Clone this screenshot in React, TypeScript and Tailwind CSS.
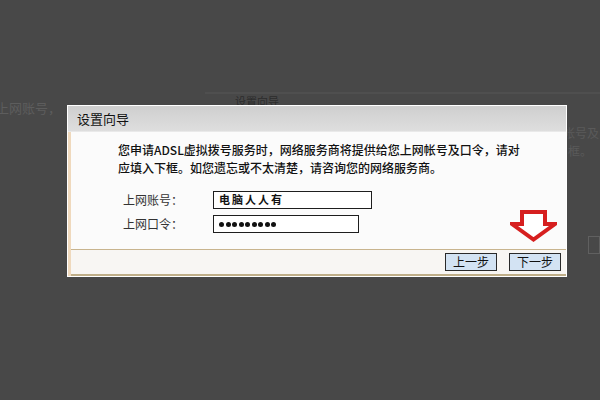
import React from 'react'

const cjk = { fontFamily: '"Noto Sans CJK SC", "Liberation Sans", sans-serif' }

// down arrow outline drawn over the wizard, pointing at the next button
const DownArrow = () => (
  <svg width="47" height="32" viewBox="0 0 47 32" className="block">
    <polygon
      points="12,2 35,2 35,14 45,14 23.5,29.5 2,14 12,14"
      fill="#ffffff"
      stroke="#d61f1f"
      strokeWidth="4"
      strokeLinejoin="miter"
    />
  </svg>
)

const WizButton = ({ label }: { label: string }) => (
  <button className="w-[52px] h-[18px] border border-[#2a2a2a] bg-[#d3e3f3] text-[12px] leading-[16px] text-[#111] flex items-center justify-center">
    {label}
  </button>
)

const Wizard = () => {
  const dots = [0, 1, 2, 3, 4, 5, 6, 7, 8]
  return (
    <div className="absolute left-[67px] top-[105px] w-[500px] h-[172px] bg-white p-px flex flex-col">
      {/* title bar */}
      <div className="h-[26px] shrink-0 bg-gradient-to-b from-[#cfcfcf] to-[#dedede] border-b border-[#e9e9e9] pl-[9px] flex items-center text-[13px] text-[#111]">
        设置向导
      </div>

      {/* body */}
      <div className="flex-1 flex flex-col border-l-[3px] border-[#efd9bd] bg-[#fbfbfb]">
        <div className="pl-[47px] pt-[9px] text-[12px] leading-[18px] font-medium text-[#111]">
          <p>您申请ADSL虚拟拨号服务时，网络服务商将提供给您上网帐号及口令，请对</p>
          <p>应填入下框。如您遗忘或不太清楚，请咨询您的网络服务商。</p>
        </div>

        <div className="pl-[52px] pt-[14px] flex flex-col gap-[6px] text-[12px] text-[#333]">
          <div className="flex items-center h-[18px]">
            <span className="w-[90px]">上网账号：</span>
            <div className="w-[159px] h-[18px] border-[1.5px] border-[#1e1e1e] bg-white pl-[5px] text-[11px] leading-[15px] font-bold text-[#111] tracking-[2px]">
              电脑人人有
            </div>
          </div>
          <div className="flex items-center h-[18px]">
            <span className="w-[90px]">上网口令：</span>
            <div className="w-[146px] h-[18px] border-[1.5px] border-[#1e1e1e] bg-white pl-[5px] flex items-center gap-[1.5px]">
              {dots.map((d) => (
                <span key={d} className="w-[5px] h-[5px] rounded-full bg-[#111]" />
              ))}
            </div>
          </div>
        </div>
        <div className="flex-1" />

        {/* footer with step buttons */}
        <div className="h-[27px] border-t border-[#c8b48e] border-b-2 border-b-[#bfae88] bg-[#f8f6f3] flex items-center justify-end gap-[12px] pr-[5px] pb-px">
          <WizButton label="上一步" />
          <WizButton label="下一步" />
        </div>
      </div>

      <div className="absolute left-[443px] top-[105px]">
        <DownArrow />
      </div>
    </div>
  )
}

export default function App() {
  return (
    <div className="relative w-[600px] h-[400px] overflow-hidden bg-[#484848]" style={cjk}>
      {/* faded page behind the wizard */}
      <div className="pt-[92px] flex">
        <div className="w-[205px] pt-[8px]">
          <p className="-ml-[4px] text-[13px] leading-[16px] text-[#5d5d5d]">上网账号，</p>
        </div>
        <div className="flex-1 border-t-2 border-[#4f4f4f] flex">
          <div className="flex-1 pl-[30px] pt-px">
            <p className="text-[11px] leading-[12px] text-[#2c2c2c]">设置向导</p>
          </div>
          <div className="w-[37px] pt-[30px] text-[12px] leading-[18px] text-[#5a5a5a] flex flex-col">
            <p className="whitespace-nowrap">帐号及口</p>
            <p className="pl-[5px] whitespace-nowrap">框。</p>
            <div className="mt-[76px] h-[18px] ml-[25px] border border-[#606060]" />
          </div>
        </div>
      </div>

      <Wizard />
    </div>
  )
}
